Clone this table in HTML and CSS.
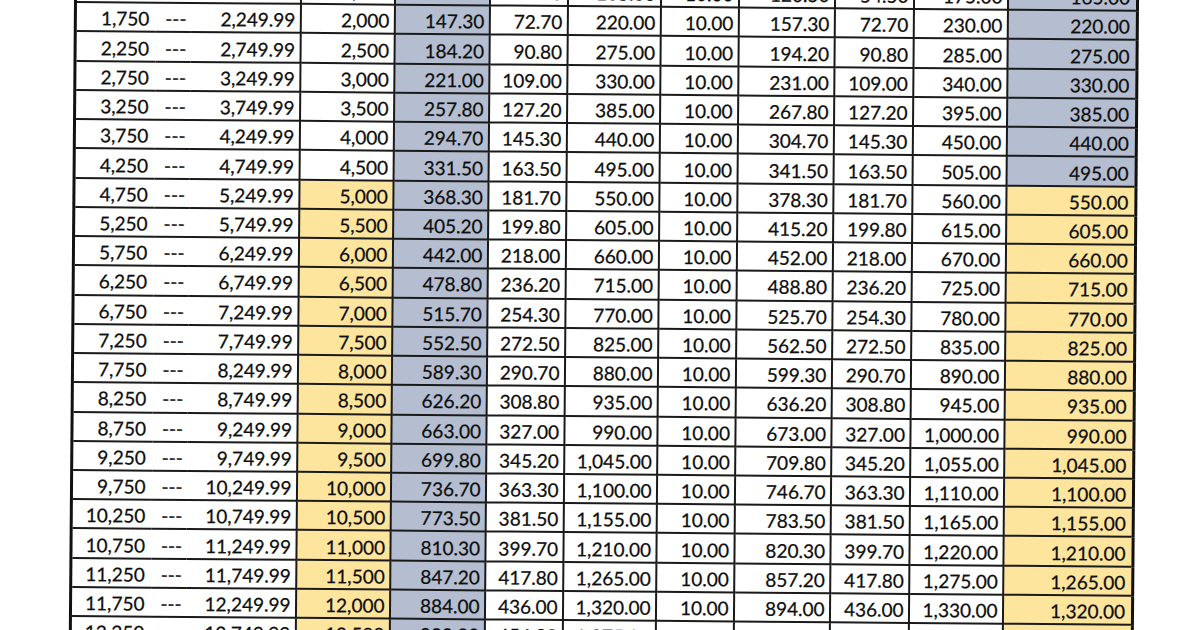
FILE: index.html
```html
<!DOCTYPE html>
<html>
<head>
<meta charset="utf-8">
<link rel="stylesheet" href="styles.css">
</head>
<body>
<div class="sheet">
<table class="grid">
<colgroup>
<col class="c-lo"><col class="c-dash"><col class="c-hi"><col class="c-msc"><col class="c-er"><col class="c-ee"><col class="c-tot"><col class="c-ec"><col class="c-er2"><col class="c-ee2"><col class="c-tot2"><col class="c-last">
</colgroup>
<tbody>
<tr><td class="lo">1,250</td><td class="dash">---</td><td class="hi">1,749.99</td><td>1,500</td><td class="blue">110.50</td><td>54.50</td><td>165.00</td><td>10.00</td><td>120.50</td><td>54.50</td><td>175.00</td><td class="blue last">165.00</td></tr>
<tr><td class="lo">1,750</td><td class="dash">---</td><td class="hi">2,249.99</td><td>2,000</td><td class="blue">147.30</td><td>72.70</td><td>220.00</td><td>10.00</td><td>157.30</td><td>72.70</td><td>230.00</td><td class="blue last">220.00</td></tr>
<tr><td class="lo">2,250</td><td class="dash">---</td><td class="hi">2,749.99</td><td>2,500</td><td class="blue">184.20</td><td>90.80</td><td>275.00</td><td>10.00</td><td>194.20</td><td>90.80</td><td>285.00</td><td class="blue last">275.00</td></tr>
<tr><td class="lo">2,750</td><td class="dash">---</td><td class="hi">3,249.99</td><td>3,000</td><td class="blue">221.00</td><td>109.00</td><td>330.00</td><td>10.00</td><td>231.00</td><td>109.00</td><td>340.00</td><td class="blue last">330.00</td></tr>
<tr><td class="lo">3,250</td><td class="dash">---</td><td class="hi">3,749.99</td><td>3,500</td><td class="blue">257.80</td><td>127.20</td><td>385.00</td><td>10.00</td><td>267.80</td><td>127.20</td><td>395.00</td><td class="blue last">385.00</td></tr>
<tr><td class="lo">3,750</td><td class="dash">---</td><td class="hi">4,249.99</td><td>4,000</td><td class="blue">294.70</td><td>145.30</td><td>440.00</td><td>10.00</td><td>304.70</td><td>145.30</td><td>450.00</td><td class="blue last">440.00</td></tr>
<tr><td class="lo">4,250</td><td class="dash">---</td><td class="hi">4,749.99</td><td>4,500</td><td class="blue">331.50</td><td>163.50</td><td>495.00</td><td>10.00</td><td>341.50</td><td>163.50</td><td>505.00</td><td class="blue last">495.00</td></tr>
<tr><td class="lo">4,750</td><td class="dash">---</td><td class="hi">5,249.99</td><td class="gold">5,000</td><td class="blue">368.30</td><td>181.70</td><td>550.00</td><td>10.00</td><td>378.30</td><td>181.70</td><td>560.00</td><td class="gold last">550.00</td></tr>
<tr><td class="lo">5,250</td><td class="dash">---</td><td class="hi">5,749.99</td><td class="gold">5,500</td><td class="blue">405.20</td><td>199.80</td><td>605.00</td><td>10.00</td><td>415.20</td><td>199.80</td><td>615.00</td><td class="gold last">605.00</td></tr>
<tr><td class="lo">5,750</td><td class="dash">---</td><td class="hi">6,249.99</td><td class="gold">6,000</td><td class="blue">442.00</td><td>218.00</td><td>660.00</td><td>10.00</td><td>452.00</td><td>218.00</td><td>670.00</td><td class="gold last">660.00</td></tr>
<tr><td class="lo">6,250</td><td class="dash">---</td><td class="hi">6,749.99</td><td class="gold">6,500</td><td class="blue">478.80</td><td>236.20</td><td>715.00</td><td>10.00</td><td>488.80</td><td>236.20</td><td>725.00</td><td class="gold last">715.00</td></tr>
<tr><td class="lo">6,750</td><td class="dash">---</td><td class="hi">7,249.99</td><td class="gold">7,000</td><td class="blue">515.70</td><td>254.30</td><td>770.00</td><td>10.00</td><td>525.70</td><td>254.30</td><td>780.00</td><td class="gold last">770.00</td></tr>
<tr><td class="lo">7,250</td><td class="dash">---</td><td class="hi">7,749.99</td><td class="gold">7,500</td><td class="blue">552.50</td><td>272.50</td><td>825.00</td><td>10.00</td><td>562.50</td><td>272.50</td><td>835.00</td><td class="gold last">825.00</td></tr>
<tr><td class="lo">7,750</td><td class="dash">---</td><td class="hi">8,249.99</td><td class="gold">8,000</td><td class="blue">589.30</td><td>290.70</td><td>880.00</td><td>10.00</td><td>599.30</td><td>290.70</td><td>890.00</td><td class="gold last">880.00</td></tr>
<tr><td class="lo">8,250</td><td class="dash">---</td><td class="hi">8,749.99</td><td class="gold">8,500</td><td class="blue">626.20</td><td>308.80</td><td>935.00</td><td>10.00</td><td>636.20</td><td>308.80</td><td>945.00</td><td class="gold last">935.00</td></tr>
<tr><td class="lo">8,750</td><td class="dash">---</td><td class="hi">9,249.99</td><td class="gold">9,000</td><td class="blue">663.00</td><td>327.00</td><td>990.00</td><td>10.00</td><td>673.00</td><td>327.00</td><td>1,000.00</td><td class="gold last">990.00</td></tr>
<tr><td class="lo">9,250</td><td class="dash">---</td><td class="hi">9,749.99</td><td class="gold">9,500</td><td class="blue">699.80</td><td>345.20</td><td>1,045.00</td><td>10.00</td><td>709.80</td><td>345.20</td><td>1,055.00</td><td class="gold last">1,045.00</td></tr>
<tr><td class="lo">9,750</td><td class="dash">---</td><td class="hi">10,249.99</td><td class="gold">10,000</td><td class="blue">736.70</td><td>363.30</td><td>1,100.00</td><td>10.00</td><td>746.70</td><td>363.30</td><td>1,110.00</td><td class="gold last">1,100.00</td></tr>
<tr><td class="lo">10,250</td><td class="dash">---</td><td class="hi">10,749.99</td><td class="gold">10,500</td><td class="blue">773.50</td><td>381.50</td><td>1,155.00</td><td>10.00</td><td>783.50</td><td>381.50</td><td>1,165.00</td><td class="gold last">1,155.00</td></tr>
<tr><td class="lo">10,750</td><td class="dash">---</td><td class="hi">11,249.99</td><td class="gold">11,000</td><td class="blue">810.30</td><td>399.70</td><td>1,210.00</td><td>10.00</td><td>820.30</td><td>399.70</td><td>1,220.00</td><td class="gold last">1,210.00</td></tr>
<tr><td class="lo">11,250</td><td class="dash">---</td><td class="hi">11,749.99</td><td class="gold">11,500</td><td class="blue">847.20</td><td>417.80</td><td>1,265.00</td><td>10.00</td><td>857.20</td><td>417.80</td><td>1,275.00</td><td class="gold last">1,265.00</td></tr>
<tr><td class="lo">11,750</td><td class="dash">---</td><td class="hi">12,249.99</td><td class="gold">12,000</td><td class="blue">884.00</td><td>436.00</td><td>1,320.00</td><td>10.00</td><td>894.00</td><td>436.00</td><td>1,330.00</td><td class="gold last">1,320.00</td></tr>
<tr><td class="lo">12,250</td><td class="dash">---</td><td class="hi">12,749.99</td><td class="gold">12,500</td><td class="blue">920.80</td><td>454.20</td><td>1,375.00</td><td>10.00</td><td>930.80</td><td>454.20</td><td>1,385.00</td><td class="gold last">1,375.00</td></tr>
</tbody>
</table>
</div>
</body>
</html>
```
FILE: styles.css
```css
html, body {
  margin: 0;
  padding: 0;
  background: #ffffff;
}
body {
  width: 1200px;
  height: 630px;
  overflow: hidden;
}
.sheet {
  padding-left: 74px;
  margin-top: -28px;
}
.grid {
  border-collapse: collapse;
  table-layout: fixed;
  width: 1062px;
  font-family: Lato, "Open Sans", sans-serif;
  font-size: 19px;
  color: #0e0e0e;
  -webkit-text-stroke: 0.25px #0e0e0e;
  transform: rotate(0.47deg);
  transform-origin: 0 29.24px;
}
.c-lo { width: 80px; }
.c-dash { width: 35px; }
.c-hi { width: 110px; }
.c-msc { width: 94px; }
.c-er { width: 95px; }
.c-ee { width: 78px; }
.c-tot { width: 93px; }
.c-ec { width: 78px; }
.c-er2 { width: 96px; }
.c-ee2 { width: 79px; }
.c-tot2 { width: 94px; }
.c-last { width: 130px; }
.grid tr {
  height: 29.24px;
}
.grid td {
  border: 2px solid #1a1a1a;
  padding: 3px 4px 0 0;
  text-align: right;
  vertical-align: middle;
  white-space: nowrap;
  line-height: 22px;
}
.grid td.lo {
  border-right: none;
  border-left: 3px solid #111;
  padding-right: 6px;
}
.grid td.dash {
  border-left: none;
  border-right: none;
  text-align: left;
  padding-left: 10px;
  padding-right: 0;
}
.grid td.hi {
  border-left: none;
}
.grid td.last {
  border-right: 3px solid #111;
  padding-right: 6px;
}
.blue {
  background: #b5bed0;
}
.gold {
  background: #fde59d;
}
```
